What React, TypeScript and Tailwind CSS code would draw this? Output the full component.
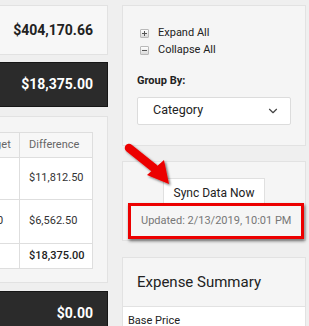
import { ChevronDown } from "lucide-react";

const font = { fontFamily: "Roboto, 'Liberation Sans', sans-serif" };

function TreeIcon({ sign }: { sign: "+" | "-" }) {
  return (
    <span className="relative flex h-[9px] w-[9px] items-center justify-center rounded-[1px] border border-[#b9b9b9] bg-gradient-to-b from-[#ffffff] to-[#d9d9d9]">
      <span className="absolute h-[1px] w-[5px] bg-[#555]" />
      {sign === "+" && <span className="absolute h-[5px] w-[1px] bg-[#555]" />}
    </span>
  );
}

function RedArrow() {
  return (
    <svg
      className="pointer-events-none absolute left-[118px] top-[137px]"
      width="60"
      height="56"
      viewBox="0 0 60 56"
    >
      <defs>
        <filter id="sh" x="-20%" y="-20%" width="150%" height="150%">
          <feDropShadow dx="1.5" dy="1.5" stdDeviation="1.2" floodColor="#000" floodOpacity="0.55" />
        </filter>
      </defs>
      <g filter="url(#sh)">
        <line x1="11" y1="11" x2="36" y2="31" stroke="#ec0000" strokeWidth="8.5" strokeLinecap="round" />
        <polygon points="29,38 46,23 51,47" fill="#ec0000" />
      </g>
    </svg>
  );
}

export default function App() {
  return (
    <div className="relative flex h-[326px] w-[309px] overflow-hidden bg-[#efefef] text-[#333]" style={font}>
      {/* left column, cut off at the window edge */}
      <div className="w-[108px] shrink-0 overflow-hidden pt-[5px]">
        <div className="ml-[-51px] flex w-[159px] flex-col">
          <div className="flex h-[50px] shrink-0 items-center justify-end border border-[#e2e2e2] bg-[#f7f7f7] pr-[14px] text-[14px] font-bold text-[#222]">
            $404,170.66
          </div>
          <div className="mt-[7px] flex h-[45px] shrink-0 items-center justify-end border border-[#161616] bg-[#2b2b2b] pr-[14px] text-[14px] font-bold text-white">
            $18,375.00
          </div>
          <div className="mt-[9px] h-[167px] shrink-0 border border-[#e2e2e2] bg-[#f5f5f5] pl-[15px] pr-[14px] pt-[15px]">
            <table className="w-full border-collapse text-[11px]">
              <tbody>
                <tr className="h-[25px] bg-[#f7f7f7] text-[#666]">
                  <td className="w-[54px] border border-[#dedede] pl-[10px]">Budget</td>
                  <td className="border border-[#dedede] pl-[9px]">Difference</td>
                </tr>
                <tr className="h-[42px] bg-white">
                  <td className="border border-[#dedede] pl-[10px]"></td>
                  <td className="border border-[#dedede] pl-[9px]">$11,812.50</td>
                </tr>
                <tr className="h-[44px] bg-white">
                  <td className="border border-[#dedede] pl-[4px]">$1,750</td>
                  <td className="border border-[#dedede] pl-[9px]">$6,562.50</td>
                </tr>
                <tr className="h-[25px] bg-white font-medium text-[#222]">
                  <td className="border border-[#dedede]"></td>
                  <td className="border border-[#dedede] pl-[9px]">$18,375.00</td>
                </tr>
              </tbody>
            </table>
          </div>
          <div className="mt-[8px] flex h-[45px] shrink-0 items-center justify-end border border-[#161616] bg-[#2b2b2b] pr-[14px] text-[14px] font-bold text-white">
            $0.00
          </div>
        </div>
      </div>

      {/* right column */}
      <div className="ml-[14px] flex w-[184px] shrink-0 flex-col pt-[5px]">
        <div className="h-[141px] shrink-0 border border-[#e2e2e2] bg-[#f5f5f5] px-[14px] pt-[21px]">
          <div className="flex flex-col gap-[5px] pl-[3px] text-[11px] text-[#222]">
            <div className="flex h-[12px] items-center gap-[9px]">
              <TreeIcon sign="+" />
              <span>Expand All</span>
            </div>
            <div className="flex h-[12px] items-center gap-[9px]">
              <TreeIcon sign="-" />
              <span>Collapse All</span>
            </div>
          </div>
          <div className="mt-[17px] text-[11px] font-bold text-[#222]">Group By:</div>
          <div className="mt-[7px] flex h-[28px] items-center justify-between rounded-[2px] border border-[#dcdcdc] bg-white pl-[15px] pr-[10px] text-[12.5px] text-[#222]">
            <span>Category</span>
            <ChevronDown size={14} strokeWidth={2} color="#444" />
          </div>
        </div>

        <div className="mt-[15px] flex h-[80px] shrink-0 flex-col border border-[#e2e2e2] bg-[#f5f5f5] pt-[16px]">
          <div className="mx-auto flex h-[28px] w-[102px] shrink-0 items-center justify-center border border-[#e0e0e0] bg-white pt-[2px] text-[12px] text-[#222]">
            Sync Data Now
          </div>
          <div className="relative z-10 ml-[5px] mr-[1px] mt-[-3px] h-[36px] shrink-0 border-[3px] border-[#ec0000] pl-[10px] pt-[7px] text-[11px] text-[#777] shadow-[1px_2px_3px_rgba(0,0,0,0.55)]">
            Updated: 2/13/2019, 10:01 PM
          </div>
        </div>

        <div className="mt-[16px] flex shrink-0 flex-col border border-[#e2e2e2] bg-[#f5f5f5]">
          <div className="flex h-[49px] items-center border-b border-[#e2e2e2] pl-[14px] text-[15px] text-[#222]">
            Expense Summary
          </div>
          <div className="h-[40px] bg-white pl-[5px] pt-[6px] text-[11px] text-[#222]">Base Price</div>
        </div>
      </div>

      <RedArrow />
    </div>
  );
}
